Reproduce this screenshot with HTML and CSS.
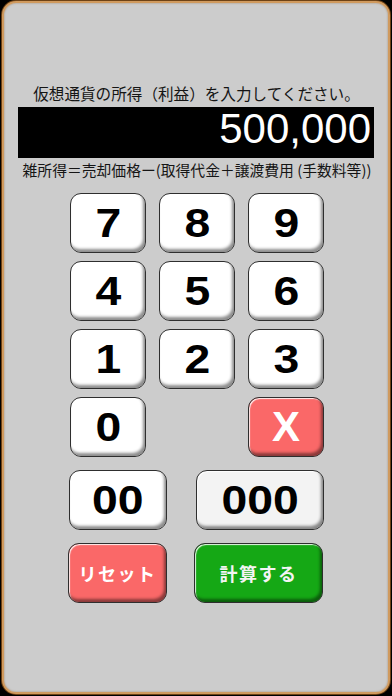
FILE: index.html
```html
<!DOCTYPE html>
<html lang="ja">
<head>
<meta charset="utf-8">
<link rel="stylesheet" href="styles.css">
</head>
<body>
<div class="panel">
  <div class="title">仮想通貨の所得（利益）を入力してください。</div>
  <div class="display">500,000</div>
  <div class="formula">雑所得＝売却価格ー(取得代金＋譲渡費用 (手数料等))</div>
  <div class="keypad">
    <div class="grid">
      <button class="key"><span class="num">7</span></button>
      <button class="key"><span class="num">8</span></button>
      <button class="key"><span class="num">9</span></button>
      <button class="key"><span class="num">4</span></button>
      <button class="key"><span class="num">5</span></button>
      <button class="key"><span class="num">6</span></button>
      <button class="key"><span class="num">1</span></button>
      <button class="key"><span class="num">2</span></button>
      <button class="key"><span class="num">3</span></button>
      <button class="key"><span class="num">0</span></button>
      <span></span>
      <button class="key red x">X</button>
    </div>
    <div class="row row-zeros">
      <button class="key w98"><span class="num">00</span></button>
      <button class="key w128 off"><span class="num">000</span></button>
    </div>
    <div class="row row-actions">
      <button class="key w99 red jp">リセット</button>
      <button class="key w129 green jp">計算する</button>
    </div>
  </div>
</div>
</body>
</html>
```

FILE: styles.css
```css
html, body {
  margin: 0;
  padding: 0;
  background: #000;
}
body {
  width: 392px;
  height: 696px;
  overflow: hidden;
  font-family: "Liberation Sans", Arial, "Noto Sans CJK JP", sans-serif;
}
.panel {
  box-sizing: border-box;
  margin: 1px 2px 0 2px;
  height: 693px;
  background: #cccccc;
  border: 2px solid #d09a5e;
  border-radius: 14px;
  box-shadow: 0 0 0 1px #6e4215, inset 0 0 2px rgba(120, 70, 20, 0.5);
}
.title {
  margin-top: 80px;
  height: 20px;
  line-height: 20px;
  text-align: center;
  font-family: "Noto Sans CJK JP", sans-serif;
  font-size: 15.6px;
  color: #151515;
  white-space: nowrap;
  padding-left: 1px;
}
.display {
  box-sizing: border-box;
  margin: 4px 14px 0 14px;
  height: 51px;
  background: #000;
  color: #fff;
  font-family: "Liberation Sans", Arial, sans-serif;
  font-size: 42px;
  line-height: 43px;
  padding: 0 3px 8px 0;
  text-align: right;
}
.formula {
  margin-top: 2px;
  height: 20px;
  line-height: 20px;
  text-align: center;
  font-family: "Noto Sans CJK JP", sans-serif;
  font-size: 14.8px;
  color: #151515;
  white-space: nowrap;
  padding-left: 2px;
}
.keypad {
  margin: 13px 0 0 66px;
  width: 256px;
}
.grid {
  display: grid;
  grid-template-columns: 76px 76px 76px;
  grid-auto-rows: 60px;
  column-gap: 13px;
  row-gap: 8px;
}
.key {
  box-sizing: border-box;
  margin: 0;
  padding: 0;
  height: 60px;
  border: 1px solid #2e2e2e;
  border-radius: 11px;
  background: #fff;
  color: #000;
  font-family: "Liberation Sans", Arial, sans-serif;
  font-weight: bold;
  font-size: 41px;
  line-height: 1;
  box-shadow: inset -2px -3px 3px rgba(0, 0, 0, 0.45), inset 1px 1px 1px rgba(255, 255, 255, 0.9);
  display: flex;
  align-items: center;
  justify-content: center;
}
.num {
  display: inline-block;
  transform: scaleX(1.13);
}
.key.off {
  background: #f3f3f3;
}
.key.red {
  background: #fa6868;
  color: #fff;
}
.key.green {
  background: #15a815;
  color: #f4f4f4;
}
.key.x {
  font-size: 42px;
}
.key.jp {
  font-family: "Noto Sans CJK JP", sans-serif;
  font-size: 18px;
  letter-spacing: 1.5px;
  font-weight: bold;
}
.row {
  display: flex;
  justify-content: space-between;
}
.row-zeros {
  margin-top: 13px;
  margin-left: -1px;
  width: 255px;
}
.row-actions {
  margin-top: 13px;
  margin-left: -2px;
  width: 255px;
}
.w98 { width: 98px; }
.w128 { width: 128px; }
.w99 { width: 99px; }
.w129 { width: 129px; }
```
